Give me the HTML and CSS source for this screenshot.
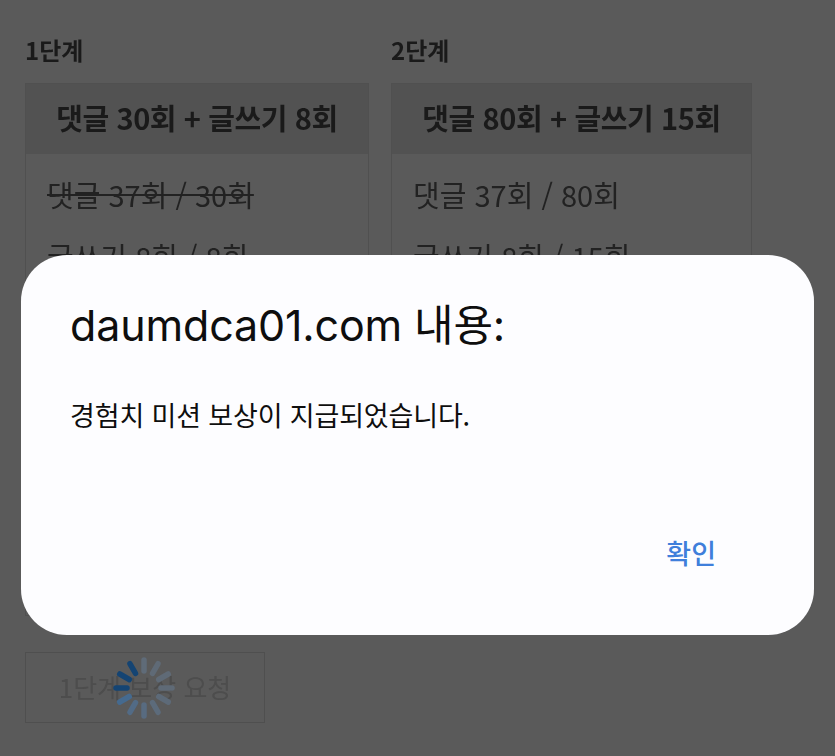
FILE: index.html
```html
<!DOCTYPE html>
<html lang="ko">
<head>
<meta charset="utf-8">
<title>경험치 미션</title>
<link rel="stylesheet" href="styles.css">
</head>
<body>
<main class="page">
  <div class="stages">
    <section class="stage stage-one">
      <h2 class="stage-title">1단계</h2>
      <div class="card">
        <div class="card-head">댓글 30회 + 글쓰기 8회</div>
        <div class="card-body">
          <p class="row done">댓글 37회 / 30회</p>
          <p class="row">글쓰기 8회 / 8회</p>
        </div>
      </div>
    </section>
    <section class="stage stage-two">
      <h2 class="stage-title">2단계</h2>
      <div class="card">
        <div class="card-head">댓글 80회 + 글쓰기 15회</div>
        <div class="card-body">
          <p class="row">댓글 37회 / 80회</p>
          <p class="row">글쓰기 8회 / 15회</p>
        </div>
      </div>
    </section>
  </div>
  <button class="reward" type="button">1단계 보상 요청</button>
</main>

<svg class="spinner" viewBox="-32 -32 64 64" width="64" height="64" aria-hidden="true">
  <g stroke-width="5.5" stroke-linecap="round">
    <line x1="0" y1="-17" x2="0" y2="-28" stroke="#5f6b78" transform="rotate(0)"/>
    <line x1="0" y1="-17" x2="0" y2="-28" stroke="#5f6a76" transform="rotate(30)"/>
    <line x1="0" y1="-17" x2="0" y2="-28" stroke="#5f6a76" transform="rotate(60)"/>
    <line x1="0" y1="-17" x2="0" y2="-28" stroke="#5f6a76" transform="rotate(90)"/>
    <line x1="0" y1="-17" x2="0" y2="-28" stroke="#5d6a78" transform="rotate(120)"/>
    <line x1="0" y1="-17" x2="0" y2="-28" stroke="#5c6b7b" transform="rotate(150)"/>
    <line x1="0" y1="-17" x2="0" y2="-28" stroke="#586b80" transform="rotate(180)"/>
    <line x1="0" y1="-17" x2="0" y2="-28" stroke="#526b86" transform="rotate(210)"/>
    <line x1="0" y1="-17" x2="0" y2="-28" stroke="#456a8f" transform="rotate(240)"/>
    <line x1="0" y1="-17" x2="0" y2="-28" stroke="#144473" transform="rotate(270)"/>
    <line x1="0" y1="-17" x2="0" y2="-28" stroke="#144473" transform="rotate(300)"/>
    <line x1="0" y1="-17" x2="0" y2="-28" stroke="#144473" transform="rotate(330)"/>
  </g>
</svg>

<div class="dialog" role="alertdialog">
  <h1 class="dialog-title">daumdca01.com 내용:</h1>
  <p class="dialog-msg">경험치 미션 보상이 지급되었습니다.</p>
  <div class="dialog-actions"><span class="dialog-ok">확인</span></div>
</div>
</body>
</html>
```

FILE: styles.css
```css
* { box-sizing: border-box; }
html, body {
  margin: 0;
  height: 100%;
}
body {
  background: #5a5a5a;
  overflow: hidden;
  position: relative;
  font-family: "Noto Sans CJK KR", "Open Sans", sans-serif;
  color: #262626;
}
.page {
  padding: 33px 25px 0;
  height: 756px;
  filter: blur(0.4px);
}
.stages {
  display: flex;
  gap: 22px;
}
.stage-one { width: 344px; }
.stage-two { width: 361px; }
.stage-title {
  margin: 0 0 17px;
  font-size: 24px;
  line-height: 33px;
  font-weight: 700;
  letter-spacing: 0;
  color: #1a1a1a;
}
.card {
  height: 533px;
  border: 1px solid #505050;
}
.card-head {
  height: 70px;
  padding-bottom: 4px;
  background: #525252;
  display: flex;
  align-items: center;
  justify-content: center;
  font-size: 29px;
  font-weight: 700;
  letter-spacing: -0.4px;
  color: #1a1a1a;
}
.card-body { padding: 20px 21px; }
.row {
  margin: 0 0 22px;
  font-size: 29px;
  line-height: 40px;
  letter-spacing: 0;
  color: #222;
}
.done { text-decoration: line-through; }
.reward {
  display: block;
  width: 240px;
  height: 71px;
  margin-top: 36px;
  padding: 0 0 3px;
  background: transparent;
  border: 1px solid #4f4f4f;
  font: inherit;
  font-size: 26px;
  color: #4d4d4d;
}
.spinner {
  position: absolute;
  left: 112px;
  top: 656px;
  filter: blur(0.5px);
}
.dialog {
  position: absolute;
  left: 21px;
  top: 255px;
  width: 793px;
  height: 380px;
  padding: 44px 49px 0;
  background: #fdfdff;
  border-radius: 46px;
  display: flex;
  flex-direction: column;
  color: #0e0e0e;
}
.dialog-title {
  margin: 0;
  font-family: "Inter", "Noto Sans CJK KR", sans-serif;
  font-size: 43px;
  line-height: 52px;
  font-weight: 400;
  letter-spacing: -0.15px;
}
.dialog-msg {
  margin: 46px 0 0;
  font-size: 27px;
  line-height: 36px;
  font-weight: 400;
  letter-spacing: -0.15px;
}
.dialog-actions {
  margin-top: auto;
  padding: 0 49px 64px 0;
  display: flex;
  justify-content: flex-end;
}
.dialog-ok {
  font-size: 27px;
  line-height: 36px;
  font-weight: 500;
  color: #3f7fdb;
}
```
